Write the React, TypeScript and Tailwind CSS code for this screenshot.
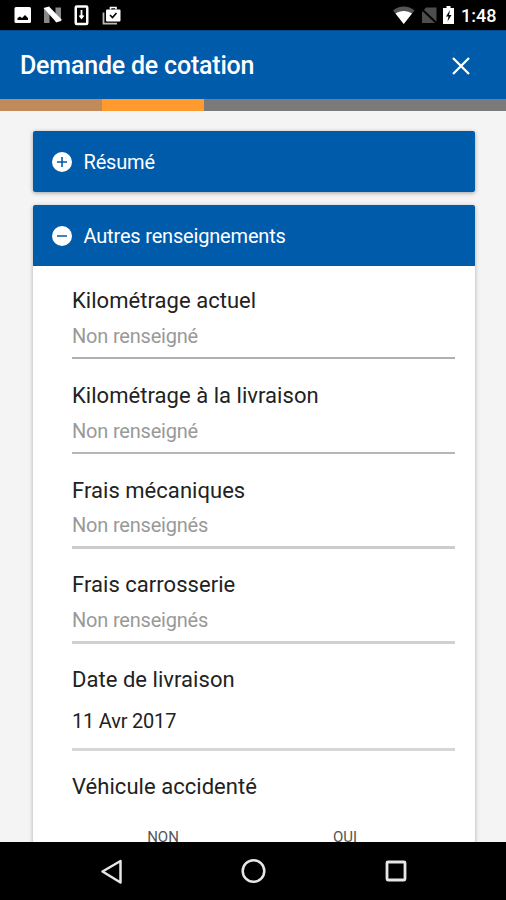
import React from 'react';

interface Field {
  label: string;
  value: string;
  line: string;
}

const fields: Field[] = [
  { label: 'Kilométrage actuel', value: 'Non renseigné', line: 'h-0.5 bg-[#b0b0b0]' },
  { label: 'Kilométrage à la livraison', value: 'Non renseigné', line: 'h-0.5 bg-[#b6b6b6]' },
  { label: 'Frais mécaniques', value: 'Non renseignés', line: 'h-[3px] bg-[#cccccc]' },
  { label: 'Frais carrosserie', value: 'Non renseignés', line: 'h-[3px] bg-[#d0d0d0]' },
];

const StatusBar = () => (
  <div className="flex h-[30px] shrink-0 items-center justify-between bg-black text-white">
    <svg width="130" height="30" viewBox="0 0 130 30">
      <rect x="14.5" y="7" width="16.5" height="16" rx="1.5" fill="#fff" />
      <path d="M17.500 20v-2l2.500-1.500 2 1.500 3-3 3 3v2z" fill="#000" />
      <path d="M44 9h5.500v14H44zM55.500 7.500H61v14h-5.500z" fill="#888" />
      <path d="M43.500 8l5.500-1.500 13 13.500-5.500 2.500z" fill="#fff" />
      <rect x="75.750" y="6.500" width="11.500" height="17.500" rx="1" fill="none" stroke="#fff" strokeWidth="2.500" />
      <path d="M81.500 10v7.500M79.500 15.500l2 2.500 2-2.500" fill="none" stroke="#fff" strokeWidth="1.800" />
      <path d="M103.500 12.500v11.200H117" fill="none" stroke="#bbb" strokeWidth="1.800" />
      <rect x="106" y="9.500" width="14.500" height="12" rx="1" fill="#fff" />
      <path d="M110.500 9.500V7.500h5.500v2" fill="none" stroke="#fff" strokeWidth="1.600" />
      <path d="M110 15l2.500 2.500 4-4.500" fill="none" stroke="#000" strokeWidth="1.600" />
    </svg>
    <div className="flex items-center">
      <svg width="70" height="30" viewBox="0 0 70 30">
        <path d="M2 10.500C8 5 17.500 5 23.500 10.500L12.700 24z" fill="#555" />
        <path d="M4.500 13.500c4.500-3.500 12-3.500 16.500 0L12.700 24z" fill="#fff" />
        <path d="M35 7.500h10.500v15.500H31V12z" fill="#4d4d4d" />
        <path d="M29 7.500l17.500 16.500" stroke="#000" strokeWidth="2" />
        <path d="M55.500 6h4v2h3.500v16H52V8h3.500z" fill="#fff" />
        <path d="M59 10l-4 6.500h2.500l-1 5 4-6.500H58z" fill="#000" />
      </svg>
      <span className="mr-[9px] w-9 pt-0.5 text-[18px] leading-[30px] font-medium whitespace-nowrap">1:48</span>
    </div>
  </div>
);

const Header = () => (
  <header className="flex h-[69px] shrink-0 items-center justify-between border-t border-[#004a8c] bg-[#005baa] pt-px pr-9 pl-5 text-white">
    <h1 className="text-[25px] leading-8 font-medium tracking-[-0.2px] whitespace-nowrap">Demande de cotation</h1>
    <svg width="18" height="18" viewBox="0 0 18 18">
      <path d="M1 1l16 16M17 1L1 17" stroke="#fff" strokeWidth="2.300" />
    </svg>
  </header>
);

const Steps = () => (
  <div className="flex h-3 shrink-0 bg-[#7a7a7a]">
    <div className="w-[102px] bg-[#c08a5a]" />
    <div className="w-[102px] bg-[#ff9a2e]" />
  </div>
);

const PanelTitle = ({ title, open }: { title: string; open?: boolean }) => (
  <div className="flex h-[61px] items-center gap-3 bg-[#005baa] pl-[18.5px] text-white">
    <svg width="20" height="20" viewBox="0 0 20 20">
      <circle cx="10" cy="10" r="10" fill="#fff" />
      <path d={open ? 'M5 10h10' : 'M5 10h10M10 5v10'} stroke="#005baa" strokeWidth="1.600" />
    </svg>
    <span className="text-[20px] leading-7 tracking-[-0.18px]">{title}</span>
  </div>
);

const App: React.FC = () => {
  return (
    <div className="flex h-[900px] w-[506px] flex-col overflow-hidden bg-[#f4f4f4] font-[Roboto,sans-serif]">
      <StatusBar />
      <Header />
      <Steps />

      <main className="flex min-h-0 flex-1 flex-col gap-[13px] overflow-hidden pt-5 pr-[31px] pl-[33px]">
        <section className="shrink-0 overflow-hidden rounded-xs shadow-[0_1px_4px_rgba(0,0,0,0.35)]">
          <PanelTitle title="Résumé" />
        </section>

        <section className="h-[700px] shrink-0 overflow-hidden rounded-xs bg-white shadow-[0_1px_4px_rgba(0,0,0,0.3)]">
          <PanelTitle title="Autres renseignements" open />
          <div className="flex flex-col pt-[21px] pr-5 pl-[39px] text-[#222]">
            {fields.map((field) => (
              <div key={field.label} className="flex h-[94.8px] flex-col">
                <p className="text-[22px] leading-7 tracking-[0.04px]">{field.label}</p>
                <p className="mt-[6.8px] text-[20px] leading-7 tracking-[-0.2px] text-[#999]">{field.value}</p>
                <div className={`mt-[7px] ${field.line}`} />
              </div>
            ))}
            <div className="flex h-[107px] flex-col">
              <p className="text-[22px] leading-7 tracking-[0.04px]">Date de livraison</p>
              <p className="mt-[13px] text-[20px] leading-7 tracking-[-0.2px]">11 Avr 2017</p>
              <div className="mt-[13px] h-[3px] bg-[#d6d6d6]" />
            </div>
            <p className="text-[22px] leading-7 tracking-[0.04px]">Véhicule accidenté</p>
            <div className="mt-[26px] flex text-[15px] leading-5 text-[#555]">
              <span className="w-[182px] text-center">NON</span>
              <span className="w-[182px] text-center">OUI</span>
            </div>
          </div>
        </section>
      </main>

      <nav className="flex h-[58px] shrink-0 bg-black">
        <svg width="506" height="58" viewBox="0 0 506 58">
          <path d="M120.500 19v21.500L102.500 29.500z" fill="none" stroke="#e6e6e6" strokeWidth="2.500" strokeLinejoin="round" />
          <circle cx="253.500" cy="29" r="10.800" fill="none" stroke="#e6e6e6" strokeWidth="2.500" />
          <rect x="387" y="20" width="18" height="18" rx="1" fill="none" stroke="#e6e6e6" strokeWidth="2.800" />
        </svg>
      </nav>
    </div>
  );
};

export default App;
